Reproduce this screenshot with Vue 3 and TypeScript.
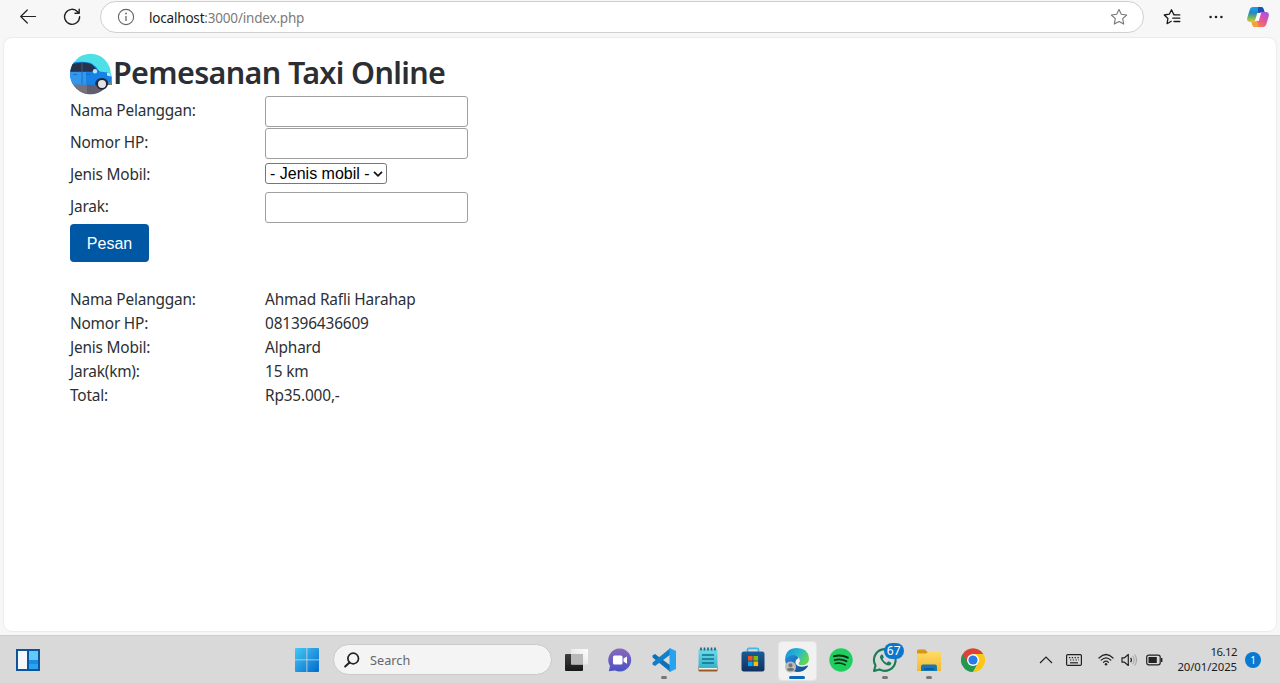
<script setup lang="ts">
import { ref } from 'vue'

interface FormField {
  label: string
  kind: 'input' | 'select'
}

interface SummaryRow {
  label: string
  value: string
}

const fields: FormField[] = [
  { label: 'Nama Pelanggan:', kind: 'input' },
  { label: 'Nomor HP:', kind: 'input' },
  { label: 'Jenis Mobil:', kind: 'select' },
  { label: 'Jarak:', kind: 'input' },
]

const values = ref<string[]>(fields.map(() => ''))

const summary: SummaryRow[] = [
  { label: 'Nama Pelanggan:', value: 'Ahmad Rafli Harahap' },
  { label: 'Nomor HP:', value: '081396436609' },
  { label: 'Jenis Mobil:', value: 'Alphard' },
  { label: 'Jarak(km):', value: '15 km' },
  { label: 'Total:', value: 'Rp35.000,-' },
]
</script>

<template>
  <div class="screen">
    <header class="toolbar">
      <button class="tool" aria-label="Back">
        <svg width="18" height="18" viewBox="0 0 18 18" fill="none" stroke="#222" stroke-width="1.2" stroke-linecap="round" stroke-linejoin="round">
          <path d="M16.5 8.5H1.7M8.3 2 1.7 8.5 8.3 15" />
        </svg>
      </button>
      <button class="tool" aria-label="Refresh">
        <svg width="18" height="18" viewBox="0 0 18 18" fill="none" stroke="#222" stroke-width="1.4" stroke-linecap="round" stroke-linejoin="round">
          <path d="M16.6 8.8A7.5 7.5 0 1 1 14.6 3.7L16.2 5.2M16.2 1.2V5.3H12" />
        </svg>
      </button>
      <div class="address">
        <svg class="info" width="18" height="18" viewBox="0 0 18 18" fill="none" stroke="#666" stroke-width="1.1">
          <circle cx="9" cy="9" r="7.6" />
          <path d="M9 8v5" stroke-width="1.3" />
          <circle cx="9" cy="5.5" r=".9" fill="#666" stroke="none" />
        </svg>
        <span class="url"><b>localhost</b>:3000/index.php</span>
        <svg class="star" width="18" height="18" viewBox="0 0 18 18" fill="none" stroke="#777" stroke-width="1.1" stroke-linejoin="round">
          <path d="m9 1.400 2.300 4.900 5.400.7-4 3.700 1 5.400L9 13.500l-4.700 2.600 1-5.400-4-3.700 5.400-.7Z" />
        </svg>
      </div>
      <button class="tool favorites" aria-label="Favorites">
        <svg width="18" height="18" viewBox="0 0 18 18" fill="none" stroke="#1a1a1a" stroke-width="1.3" stroke-linecap="round" stroke-linejoin="round">
          <path d="M11.200 6.400 10.600 6.300 8.500 1.800 6.300 6.200l-5 .8 3.600 3.500-.8 5.200 4.100-2.400M11 6.900h5.800M9.800 10.200h7M11 13.500h5.800" />
        </svg>
      </button>
      <button class="tool" aria-label="More">
        <svg width="16" height="6" viewBox="0 0 16 6" fill="#222">
          <circle cx="2.6" cy="3" r="1.3" /><circle cx="8" cy="3" r="1.3" /><circle cx="13.4" cy="3" r="1.3" />
        </svg>
      </button>
      <button class="tool copilot" aria-label="Copilot">
        <svg width="24" height="22" viewBox="0 0 24 22">
          <defs>
            <linearGradient id="cpA" x1="0" y1="0" x2="0" y2="1">
              <stop offset="0" stop-color="#1aa0e8" /><stop offset=".4" stop-color="#2588c8" /><stop offset=".7" stop-color="#6db85a" /><stop offset="1" stop-color="#ecc72c" />
            </linearGradient>
            <linearGradient id="cpB" x1=".8" y1="0" x2=".2" y2="1">
              <stop offset="0" stop-color="#a653e8" /><stop offset=".45" stop-color="#e0569b" /><stop offset="1" stop-color="#ff8244" />
            </linearGradient>
          </defs>
          <path d="M7 1h8q2 0 2.700 2.200L18.500 6h-3q-2 0-2.700 2.300l-1.700 5.500Q10.300 16 8 16H4.500Q.3 16 1.300 11.700L3.600 4Q4.500 1 7 1Z" fill="url(#cpA)" />
          <path d="M12 1h3q2 0 2.700 2.200L18.500 6h-3q-2 0-2.600 2L12 6Z" fill="#1852b5" />
          <path d="M17 21H9q-2 0-2.700-2.200L5.500 16h3q2 0 2.700-2.300l1.700-5.500Q13.700 6 16 6h3.500q4.200 0 3.200 4.300L20.400 18Q19.500 21 17 21Z" fill="url(#cpB)" />
          <path d="m11.300 7h3.800l-2.400 8H8.900Z" fill="#fff" />
          <path d="M5.500 16h3q2 0 2.700-2l1 4q.7 3-1.200 3H9q-2 0-2.700-2.200Z" fill="#f4a13d" />
        </svg>
      </button>
    </header>

    <main class="page">
      <h1 class="title">
        <svg class="logo" width="43" height="42" viewBox="0 0 43 42">
          <defs>
            <clipPath id="disc"><circle cx="20.500" cy="21" r="20.300" /></clipPath>
            <clipPath id="car"><path d="M20.500.7H43V34H36A20.300 20.300 0 1 1 20.500.7Z" /></clipPath>
          </defs>
          <g clip-path="url(#disc)">
            <path d="M0 0h43v42H0z" fill="#4de1e7" />
            <path d="M0 30h43v12H0z" fill="#635d6d" />
            <path d="M0 31h17v11H0z" fill="#77717f" />
          </g>
          <g clip-path="url(#car)">
            <path d="M0 10Q12 7.500 21 10q5 3 8.500 8.500l8 1q4 1.200 4.300 5V32H24l-24-1Z" fill="#1782e6" />
            <path d="M0 19h16v12.500H0Z" fill="#3496ec" />
            <path d="M0 11.500Q15 7.500 22 11.500q3.500 3 6 7.300H0Z" fill="#26334c" />
            <path d="M12 9v10" stroke="#48516a" stroke-width="1.200" />
            <path d="M12 19v12M3 21.500h4m9 0h4" stroke="#1267c1" stroke-width=".8" />
            <path d="m23.500 18.800 5.500-.3" stroke="#1269bf" stroke-width="1.200" />
          </g>
          <path d="m37 19.800 3 .8 1 2.900-4-1Z" fill="#b6f2fb" />
          <circle cx="25" cy="18.300" r="2.200" fill="#b1e6fa" />
          <path d="M25 32q0-7 7-7 6.500 0 6.500 7" fill="#153c79" />
          <circle cx="32" cy="31" r="5.800" fill="#242635" /><circle cx="32" cy="31" r="4" fill="#e4e3e5" />
          <path d="M38.500 29.500H42V32h-3.500Z" fill="#987f58" />
        </svg>
        <span>Pemesanan Taxi Online</span>
      </h1>

      <form class="booking" @submit.prevent>
        <div v-for="(field, i) in fields" :key="field.label" class="field">
          <label :for="'field-' + i">{{ field.label }}</label>
          <input v-if="field.kind === 'input'" :id="'field-' + i" v-model="values[i]" type="text" />
          <div v-else :id="'field-' + i" class="select" role="combobox" tabindex="0">
            <span>- Jenis mobil -</span>
            <svg width="10" height="8" viewBox="0 0 10 8" fill="none" stroke="#111" stroke-width="1.700"><path d="m1 1.800 4 4 4-4" /></svg>
          </div>
        </div>
        <button class="submit" type="submit">Pesan</button>
      </form>

      <dl class="summary">
        <div v-for="row in summary" :key="row.label" class="row">
          <dt>{{ row.label }}</dt>
          <dd>{{ row.value }}</dd>
        </div>
      </dl>
    </main>

    <footer class="taskbar">
      <div class="widgets">
        <svg width="24" height="22" viewBox="0 0 24 22">
          <path d="M0 0h24v22H0z" fill="#0c559e" /><path d="M2 2h9v18H2z" fill="#f5f8fc" />
          <path d="M13 2h9v9h-9z" fill="#5fcbfa" /><path d="M13 11h9v4h-9z" fill="#1c8ee2" /><path d="M13 15h9v5h-9z" fill="#2aa4f1" />
        </svg>
      </div>
      <div class="apps">
        <div class="slot">
          <svg width="24" height="24" viewBox="0 0 24 24">
            <defs><linearGradient id="win" gradientUnits="userSpaceOnUse" x1="0" y1="0" x2="24" y2="24"><stop stop-color="#45c9f7" /><stop offset="1" stop-color="#0369cb" /></linearGradient></defs>
            <path d="M0 1q0-1 1-1h10.500v11.500H0ZM12.300 0H23q1 0 1 1v10.500H12.300ZM0 12.300h11.500V24H1q-1 0-1-1ZM12.300 12.300H24V23q0 1-1 1H12.300Z" fill="url(#win)" />
          </svg>
        </div>
        <div class="search">
          <svg width="16" height="16" viewBox="0 0 16 16" fill="none" stroke="#222" stroke-width="1.700" stroke-linecap="round"><circle cx="9.200" cy="6.500" r="5.300" /><path d="m5.500 10.500-4.300 4" stroke-width="2" /></svg>
          <span>Search</span>
        </div>
        <div class="slot">
          <svg width="26" height="26" viewBox="0 0 26 26">
            <defs>
              <linearGradient id="tvA" x1="0" y1="0" x2="0" y2="1"><stop stop-color="#3e3e3e" /><stop offset="1" stop-color="#181818" /></linearGradient>
              <linearGradient id="tvB" x1="1" y1="0" x2="0" y2="1"><stop stop-color="#fff" /><stop offset="1" stop-color="#d9d9d9" /></linearGradient>
            </defs>
            <rect x="2" y="7" width="18" height="17" rx="1" fill="url(#tvA)" /><rect x="8" y="2" width="17" height="15.500" rx="1" fill="url(#tvB)" /><path d="M8 7h12v10.500H8z" fill="#b9b9b9" />
          </svg>
        </div>
        <div class="slot">
          <svg width="24" height="24" viewBox="0 0 24 24">
            <defs><linearGradient id="chat" x1="0" y1="0" x2="0" y2="1"><stop stop-color="#8a68bd" /><stop offset="1" stop-color="#4b52c4" /></linearGradient></defs>
            <path d="M12 .500A11.500 11.500 0 1 1 7 22.500L.8 23.300 2 18A11.500 11.500 0 0 1 12 .500Z" fill="url(#chat)" />
            <rect x="5" y="7.500" width="9.500" height="9" rx="1.500" fill="#fff" /><path d="m15.500 10.600 3.500-2.200v7.400l-3.500-2.200Z" fill="#fff" />
          </svg>
        </div>
        <div class="slot">
          <svg width="26" height="26" viewBox="0 0 26 26">
            <path d="M1.500 8.600 4 7 19.500 18.500V25L1.600 10.400Z" fill="#0c71b9" />
            <path d="M1.500 17.400 4 19 19.500 7.500V1L1.600 15.600Z" fill="#137fc8" />
            <path d="M18.500 1 25 4v18l-6.500 3Z" fill="#27a2ef" />
          </svg>
          <i class="mark" />
        </div>
        <div class="slot">
          <svg width="20" height="25" viewBox="0 0 20 25">
            <defs><linearGradient id="note" x1="0" y1="0" x2="0" y2="1"><stop stop-color="#73dbe9" /><stop offset="1" stop-color="#37b1cb" /></linearGradient></defs>
            <rect x=".5" y="19" width="19" height="5.500" rx="1" fill="#9a5a28" /><path d="M1 20h18v2.500H1z" fill="#f4f1e7" /><rect x=".5" y="2" width="19" height="19" rx="1.500" fill="url(#note)" />
            <path d="M4 8h12M4 12h12M4 16h12" stroke="#08768d" stroke-width="1.300" />
            <path d="M3 .5v3M6.500.5v3M10 .5v3M13.500.5v3M17 .5v3" stroke="#176b84" stroke-width="1.700" />
          </svg>
        </div>
        <div class="slot">
          <svg width="24" height="25" viewBox="0 0 24 25">
            <defs><linearGradient id="store" x1="0" y1="0" x2="0" y2="1"><stop stop-color="#185e98" /><stop offset="1" stop-color="#12305f" /></linearGradient></defs>
            <path d="M6.500 6V2.800q0-1.500 1.500-1.500h8q1.500 0 1.500 1.500V6" fill="none" stroke="#45b6e9" stroke-width="1.700" />
            <rect x=".5" y="4.500" width="23" height="20" rx="2.500" fill="url(#store)" />
            <path d="M7 9h4.600v4.600H7z" fill="#f25325" /><path d="M12.500 9h4.600v4.600h-4.600z" fill="#80bc06" /><path d="M7 14.500h4.600v4.600H7z" fill="#05a6f0" /><path d="M12.500 14.500h4.600v4.600h-4.600z" fill="#ffba08" />
          </svg>
        </div>
        <div class="slot active">
          <svg width="26" height="26" viewBox="0 0 26 26">
            <defs>
              <linearGradient id="edA" x1="0" y1="0" x2="1" y2=".5"><stop stop-color="#168ee0" /><stop offset=".55" stop-color="#27b8cf" /><stop offset="1" stop-color="#64d554" /></linearGradient>
              <linearGradient id="edB" x1="0" y1="0" x2="1" y2="1"><stop stop-color="#2594e8" /><stop offset="1" stop-color="#134583" /></linearGradient>
            </defs>
            <path d="M1 13Q2 7 8.500 7q4.500 0 6 4-4 2-2.800 6 3 4.500 11.800 1.500.8 0 .3 1Q20 25 13 25 2 24 1 13Z" fill="url(#edB)" />
            <path d="M1 12Q2 1 13 1q11 0 12 10 .3 7-7 7.300-4-.1-3.200-2.300 2-2.500.3-5Q9.500 4.500 1 12Z" fill="url(#edA)" />
            <circle cx="6.500" cy="20" r="5.500" fill="#bdbdbd" /><circle cx="6.500" cy="18.200" r="2" fill="#757575" /><path d="M3 23q0-2.300 3.500-2.300T10 23q-3.500 2.500-7 0Z" fill="#757575" />
          </svg>
          <i class="mark wide" />
        </div>
        <div class="slot">
          <svg width="24" height="24" viewBox="0 0 24 24">
            <circle cx="12" cy="12" r="11.700" fill="#1dd05d" />
            <g fill="none" stroke="#10291a" stroke-linecap="round"><path d="M5 8.200q7-2 13.800 1.400" stroke-width="2.100" /><path d="M5.700 12q6-1.700 11.800 1.300" stroke-width="1.800" /><path d="M6.200 15.500q5.500-1.200 10.100 1.300" stroke-width="1.500" /></g>
          </svg>
        </div>
        <div class="slot">
          <svg width="26" height="26" viewBox="0 0 26 26" fill="none" stroke="#197d56" stroke-width="2.100" stroke-linejoin="round">
            <path d="M2 24 3.500 18.500A10.800 10.800 0 1 1 7.500 22.400Z" />
            <path d="M9.500 7.500q-3 2 0 6 3.500 5 7.500 5 3-1 2-3l-2.700-1.300-1.700 1.700q-2.700-1-4-3.800l1.200-1.500-1-2.800Z" fill="#197d56" stroke="none" />
          </svg>
          <span class="badge">67</span>
          <i class="mark" />
        </div>
        <div class="slot">
          <svg width="26" height="24" viewBox="0 0 26 24">
            <defs><linearGradient id="folder" x1="0" y1="0" x2="0" y2="1"><stop stop-color="#ffda63" /><stop offset="1" stop-color="#f3b932" /></linearGradient></defs>
            <path d="M1 3q0-1.500 1.500-1.500H9L11.500 4H24v6H1Z" fill="#d79614" /><path d="M1 5.500h9l2-1.500h12q1 0 1 1v18H1Z" fill="url(#folder)" />
            <path d="M5 23v-4.500q0-2 2-2h12q2 0 2 2V23Z" fill="#1676b8" /><path d="M8 21h10" stroke="#0a568d" stroke-width="1.500" />
          </svg>
          <i class="mark" />
        </div>
        <div class="slot">
          <svg width="24" height="24" viewBox="0 0 24 24">
            <path d="M12 12 1.800 6A12 12 0 0 1 22.200 6Z" fill="#df4135" />
            <path d="M1.600 6A12 12 0 0 0 12 24l5.200-9-5.200-3Z" fill="#239850" />
            <path d="M22.400 6A12 12 0 0 1 12 24l5.200-9L12 6Z" fill="#fbc719" />
            <path d="M1.700 6 7 15l5-9Z" fill="#df4135" />
            <circle cx="12" cy="12" r="6" fill="#fff" /><circle cx="12" cy="12" r="4.600" fill="#287be8" />
          </svg>
        </div>
      </div>
      <div class="tray">
        <svg class="chevron" width="14" height="10" viewBox="0 0 14 10" fill="none" stroke="#222" stroke-width="1.200"><path d="m1 8 6-6 6 6" /></svg>
        <svg class="keyboard" width="16" height="12" viewBox="0 0 16 12" fill="none" stroke="#222" stroke-width="1.200">
          <rect x=".6" y=".6" width="14.800" height="10.800" rx="1.200" /><path d="M3 3.600h10M4 6h9" stroke-dasharray="1.300 1.500" /><path d="M4 8.800h8" />
        </svg>
        <svg class="wifi" width="16" height="13" viewBox="0 0 16 13" fill="none" stroke="#222" stroke-width="1.200" stroke-linecap="round">
          <path d="M1 5q7-7 14 0M3.200 7.200q4.800-4.800 9.600 0M5.500 9.400q2.500-2.500 5 0" /><circle cx="8" cy="11.200" r="1.200" fill="#222" stroke="none" />
        </svg>
        <svg class="sound" width="17" height="14" viewBox="0 0 17 14" fill="none" stroke="#222" stroke-width="1.200" stroke-linejoin="round">
          <path d="M1 4.800h2.500L7.300 1.500v11L3.500 9.200H1ZM9.600 4.800q1.700 2.200 0 4.400" /><path d="M11.700 3q3 4 0 8M13.600 1.500q4 5.500 0 11" stroke="#aaa" />
        </svg>
        <svg class="battery" width="17" height="12" viewBox="0 0 17 12">
          <rect x=".7" y="1.200" width="13.500" height="9.600" rx="2" fill="none" stroke="#222" stroke-width="1.200" /><path d="M2.500 3h8.300v6H2.500z" fill="#222" /><path d="M15 4h1.400v4H15z" fill="#222" />
        </svg>
        <div class="clock"><span>16.12</span><span>20/01/2025</span></div>
        <span class="count">1</span>
      </div>
    </footer>
  </div>
</template>

<style>
html,
body {
  margin: 0;
  overflow: hidden;
}
</style>

<style scoped>
* {
  box-sizing: border-box;
}
.screen {
  width: 1280px;
  height: 683px;
  display: flex;
  flex-direction: column;
  background: #f7f7f7;
  font-family: 'Noto Sans', 'Open Sans', sans-serif;
  color: #2b2f33;
}
svg {
  display: block;
  flex: none;
}
.toolbar {
  height: 37px;
  flex: none;
  display: flex;
  align-items: flex-start;
  padding: 1px 0 0 6px;
}
.tool {
  width: 44px;
  height: 32px;
  padding: 0;
  border: 0;
  background: none;
  display: grid;
  place-items: center;
}
.address {
  width: 1044px;
  height: 32px;
  margin-left: 6px;
  padding: 0 15px 0 16px;
  border: 1px solid #cfcfcf;
  border-radius: 16px;
  background: #fff;
  display: flex;
  align-items: center;
}
.url {
  flex: 1;
  margin-left: 14px;
  padding-top: 2px;
  font-size: 13.5px;
  line-height: 18px;
  letter-spacing: -0.19px;
  color: #7b7b7b;
}
.url b {
  font-weight: 400;
  color: #1b1b1b;
}
.favorites {
  margin-left: 6px;
}
.copilot {
  margin-left: -2px;
}
.page {
  height: 595px;
  flex: none;
  margin: 0 3px;
  padding: 14px 0 0 66px;
  border: 1px solid #ececec;
  border-radius: 9px;
  background: #fff;
}
.title {
  height: 43px;
  margin: 0;
  display: flex;
  align-items: center;
  font-size: 30.5px;
  font-weight: 600;
  line-height: 38px;
  letter-spacing: -0.64px;
}
.title span {
  margin-top: -3px;
}
.field {
  height: 32px;
  display: flex;
  align-items: flex-start;
}
.field label,
.row dt {
  width: 195px;
  margin: 0;
  font-size: 15.4px;
  line-height: 24px;
  letter-spacing: -0.2px;
}
.field label {
  margin-top: 4px;
}
.field input {
  width: 203px;
  height: 31px;
  margin-top: 1px;
  border: 1px solid #a0a0a0;
  border-radius: 3px;
  background: #fff;
  outline: none;
  font-size: 16px;
}
.select {
  width: 122px;
  height: 21px;
  margin-top: 4px;
  padding: 0 3px 0 4px;
  border: 1px solid #777;
  border-radius: 3px;
  display: flex;
  align-items: center;
  justify-content: space-between;
  color: #000;
  font: 16px/19px 'Liberation Sans', Arial, sans-serif;
  white-space: nowrap;
}
.submit {
  width: 79px;
  height: 38px;
  margin: 1px 0 0;
  padding: 1px 0 0;
  display: block;
  border: 0;
  border-radius: 4px;
  background: #0057a3;
  color: #fff;
  font: 16px/24px 'Liberation Sans', Arial, sans-serif;
}
.summary {
  margin: 26px 0 0;
}
.row {
  display: flex;
  height: 24px;
}
.row dd {
  margin: 0;
  font-size: 15.4px;
  line-height: 24px;
  letter-spacing: -0.16px;
}
.taskbar {
  height: 48px;
  margin-top: auto;
  flex: none;
  display: flex;
  background: #d9d9d9;
  border-top: 1px solid #cecece;
}
.widgets {
  width: 285px;
  padding: 13px 0 0 16px;
}
.apps {
  width: 710px;
  display: flex;
}
.slot {
  position: relative;
  width: 44.1px;
  height: 47px;
  display: grid;
  place-items: center;
}
.slot > svg {
  position: relative;
}
.search {
  width: 219px;
  height: 31px;
  margin: 8px 2px 0 4px;
  padding-left: 10px;
  display: flex;
  align-items: center;
  gap: 10px;
  border: 1px solid #c9c9c9;
  border-radius: 16px;
  background: #f4f4f4;
  color: #666;
  font-size: 12.7px;
}
.active::before {
  content: '';
  position: absolute;
  left: 3px;
  top: 5px;
  width: 37px;
  height: 38px;
  border: 1px solid #e4e4e4;
  border-radius: 4px;
  background: #f1f1f1;
}
.mark {
  position: absolute;
  left: 19px;
  bottom: 4px;
  width: 6px;
  height: 3px;
  border-radius: 2px;
  background: #777;
}
.mark.wide {
  left: 14px;
  width: 16px;
  background: #0b68b7;
}
.badge {
  position: absolute;
  left: 21px;
  top: 7px;
  width: 20px;
  height: 16px;
  border-radius: 8px;
  background: #0b76ce;
  color: #fff;
  font-size: 12px;
  line-height: 16px;
  text-align: center;
}
.tray {
  flex: 1;
  display: flex;
  align-items: center;
  padding-left: 44px;
}
.keyboard {
  margin-left: 13px;
}
.wifi {
  margin-left: 16px;
}
.sound {
  margin-left: 7px;
}
.battery {
  margin-left: 8px;
}
.clock {
  width: 74px;
  margin-top: -2px;
  display: flex;
  flex-direction: column;
  align-items: flex-end;
  font-size: 11.4px;
  line-height: 15px;
  letter-spacing: -0.1px;
  color: #1c1c1c;
}
.clock span:first-child {
  letter-spacing: -0.5px;
}
.count {
  width: 16px;
  height: 16px;
  margin-left: 8px;
  border-radius: 50%;
  background: #0878d1;
  color: #fff;
  font-size: 10px;
  line-height: 16px;
  text-align: center;
}
</style>
